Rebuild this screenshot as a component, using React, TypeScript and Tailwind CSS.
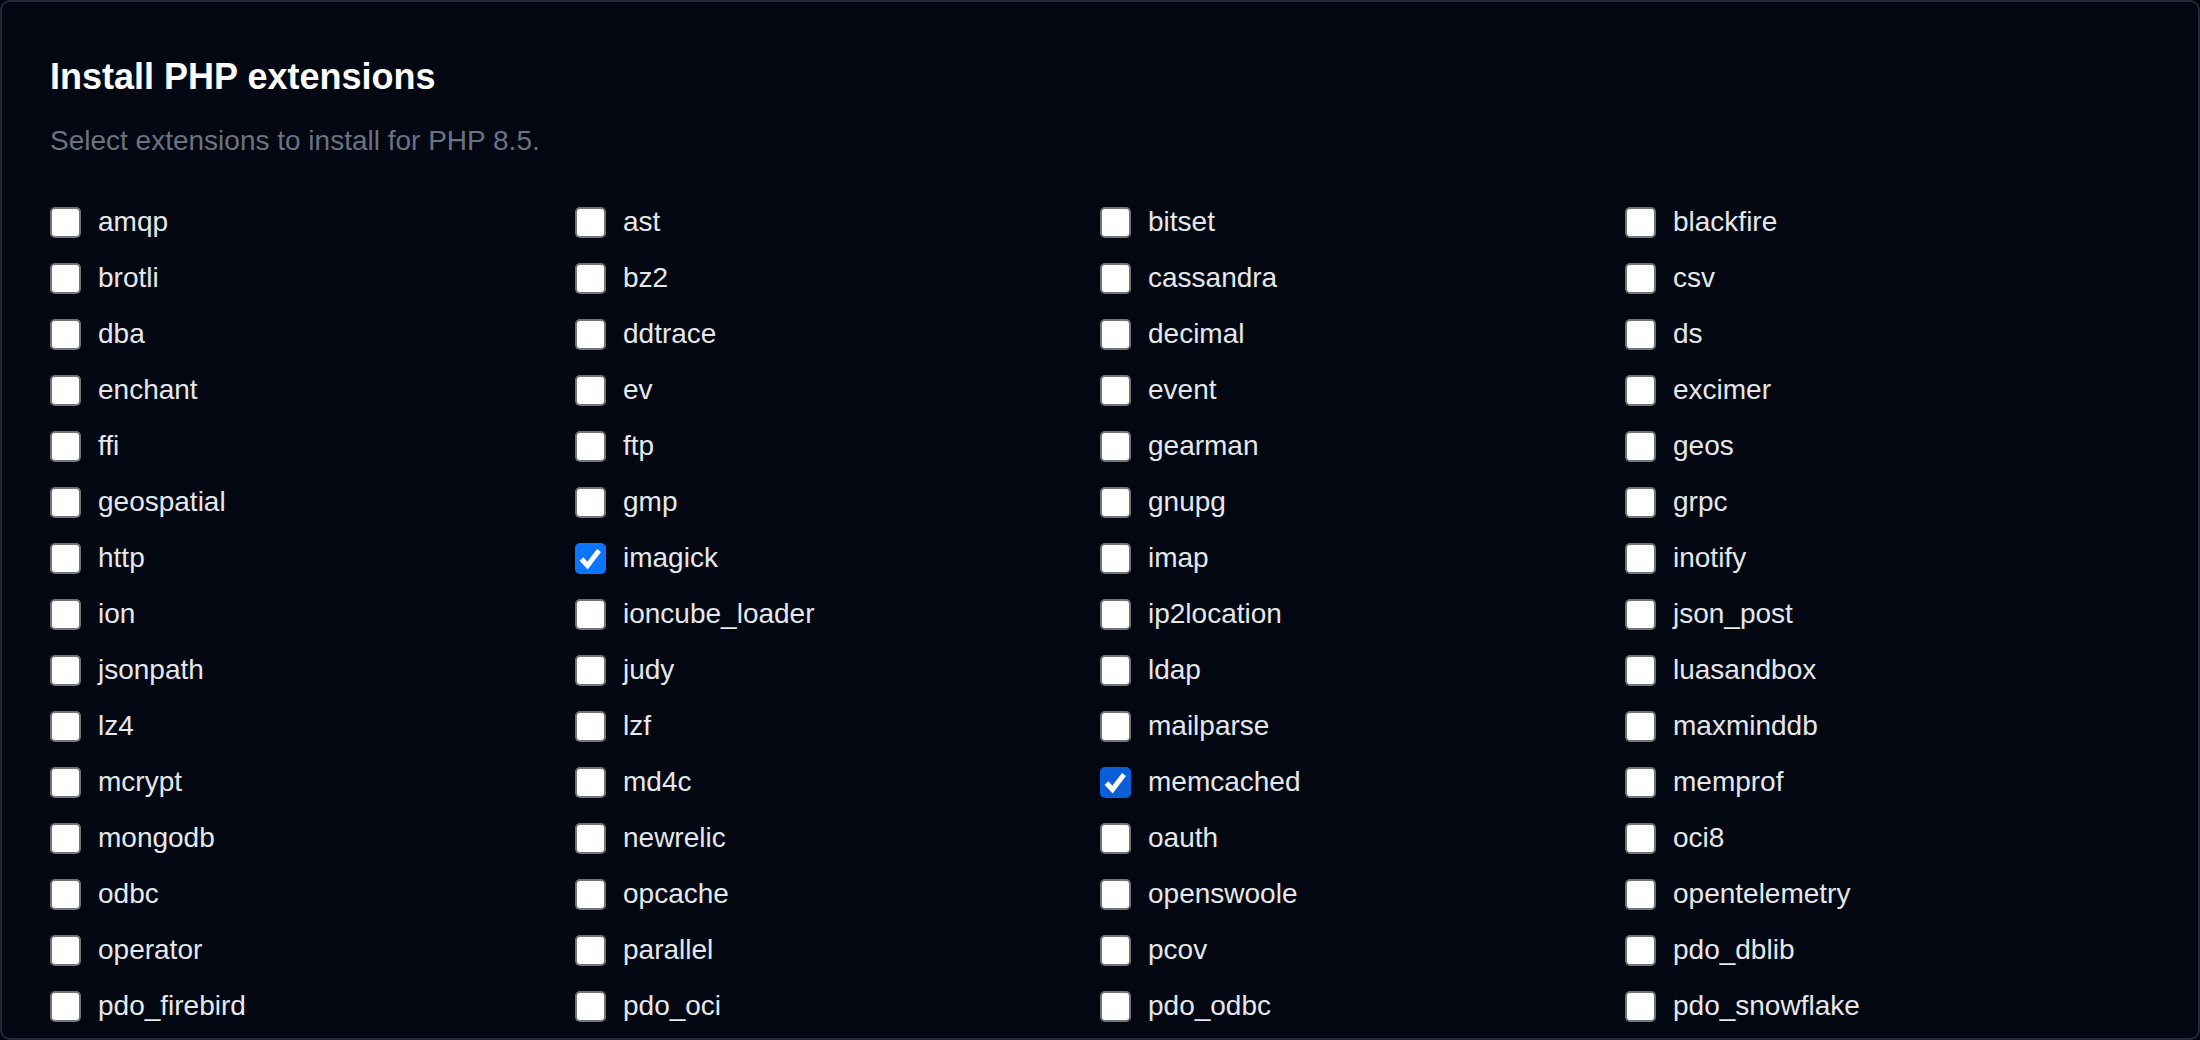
import React from "react";

const EXTS = [
  "amqp", "ast", "bitset", "blackfire",
  "brotli", "bz2", "cassandra", "csv",
  "dba", "ddtrace", "decimal", "ds",
  "enchant", "ev", "event", "excimer",
  "ffi", "ftp", "gearman", "geos",
  "geospatial", "gmp", "gnupg", "grpc",
  "http", "imagick", "imap", "inotify",
  "ion", "ioncube_loader", "ip2location", "json_post",
  "jsonpath", "judy", "ldap", "luasandbox",
  "lz4", "lzf", "mailparse", "maxminddb",
  "mcrypt", "md4c", "memcached", "memprof",
  "mongodb", "newrelic", "oauth", "oci8",
  "odbc", "opcache", "openswoole", "opentelemetry",
  "operator", "parallel", "pcov", "pdo_dblib",
  "pdo_firebird", "pdo_oci", "pdo_odbc", "pdo_snowflake",
];

function Box({ state }: { state: "off" | "on" | "onDark" }) {
  if (state === "off") {
    return (
      <span className="w-[31px] h-[31px] shrink-0 rounded-[5px] border-[2px] border-[#737373] bg-white" />
    );
  }
  return (
    <span
      className={
        state === "on"
          ? "w-[31px] h-[31px] shrink-0 rounded-[5px] bg-[#0a75ff] flex items-center justify-center"
          : "w-[31px] h-[31px] shrink-0 rounded-[5px] bg-[#0b5ed8] flex items-center justify-center"
      }
    >
      <svg width="31" height="31" viewBox="0 0 31 31">
        <path d="M6.5 16 L12.5 22.5 L24 7.5" fill="none" stroke="white" strokeWidth="5" strokeLinejoin="miter" />
      </svg>
    </span>
  );
}

export default function App() {
  return (
    <div className="w-[2200px] h-[1040px] bg-[#030712] overflow-hidden" style={{ fontFamily: '"Liberation Sans", Arial, sans-serif' }}>
      <div className="w-full h-full rounded-[10px] border-[2px] border-[#1f2937] bg-[#030712] overflow-hidden px-[48px] pt-[50px]">
        <h1 className="text-[36px] leading-[49px] font-bold text-white">Install PHP extensions</h1>
        <p className="mt-[19px] text-[28px] leading-[42px] text-[#6b7280]">Select extensions to install for PHP 8.5.</p>
        <div className="mt-[39px] grid grid-cols-4 gap-x-0 gap-y-[14px]">
          {EXTS.map((e) => {
            const state = e === "imagick" ? "on" : e === "memcached" ? "onDark" : "off";
            return (
              <label key={e} className="flex items-center gap-[17px] h-[42px]">
                <Box state={state} />
                <span className="text-[28px] leading-[42px] text-[#e5e7eb]">{e}</span>
              </label>
            );
          })}
        </div>
      </div>
    </div>
  );
}
